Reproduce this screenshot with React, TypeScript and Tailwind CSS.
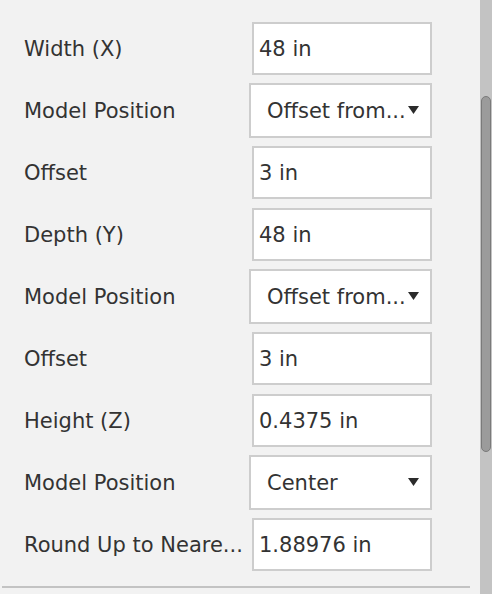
import React from "react";

type Row =
  | { label: string; kind: "text"; value: string }
  | { label: string; kind: "select"; value: string };

const rows: Row[] = [
  { label: "Width (X)", kind: "text", value: "48 in" },
  { label: "Model Position", kind: "select", value: "Offset from..." },
  { label: "Offset", kind: "text", value: "3 in" },
  { label: "Depth (Y)", kind: "text", value: "48 in" },
  { label: "Model Position", kind: "select", value: "Offset from..." },
  { label: "Offset", kind: "text", value: "3 in" },
  { label: "Height (Z)", kind: "text", value: "0.4375 in" },
  { label: "Model Position", kind: "select", value: "Center" },
  { label: "Round Up to Neare...", kind: "text", value: "1.88976 in" },
];

function Caret() {
  return (
    <svg width="11" height="8" viewBox="0 0 11 8" className="shrink-0">
      <path d="M0 0 H11 L5.5 8 Z" fill="#2b2b2b" />
    </svg>
  );
}

export default function App() {
  return (
    <div
      className="flex h-[594px] w-[492px] overflow-hidden bg-[#f2f2f2] text-[21px] text-[#333333]"
      style={{ fontFamily: '"DejaVu Sans", Verdana, sans-serif' }}
    >
      <div className="flex-1 pt-[17px]">
        {rows.map((row, i) => (
          <div key={i} className="flex h-[62px] items-center">
            <div className="w-[249px] whitespace-nowrap pl-[24px] pt-[4px]">{row.label}</div>
            {row.kind === "text" ? (
              <div className="ml-[3px] flex h-[53px] w-[180px] items-center border-2 border-[#cdcdcd] bg-white pl-[5px] pt-[4px] whitespace-nowrap">
                {row.value}
              </div>
            ) : (
              <div className="flex h-[55px] w-[183px] items-center justify-between border-2 border-[#cdcdcd] bg-white pl-[16px] pr-[11px] whitespace-nowrap">
                <span className="pt-[4px]">{row.value}</span>
                <Caret />
              </div>
            )}
          </div>
        ))}
        <div className="ml-[2px] mt-[11px] h-[2px] w-[468px] bg-[#c3c3c3]" />
      </div>
      <div className="flex w-[12px] flex-col bg-[#c3c3c3] pl-[1px] pr-[1px]">
        <div className="mt-[96px] h-[356px] w-[10px] rounded-full border border-[#7a7a7a] bg-[#9b9b9b]" />
      </div>
    </div>
  );
}
